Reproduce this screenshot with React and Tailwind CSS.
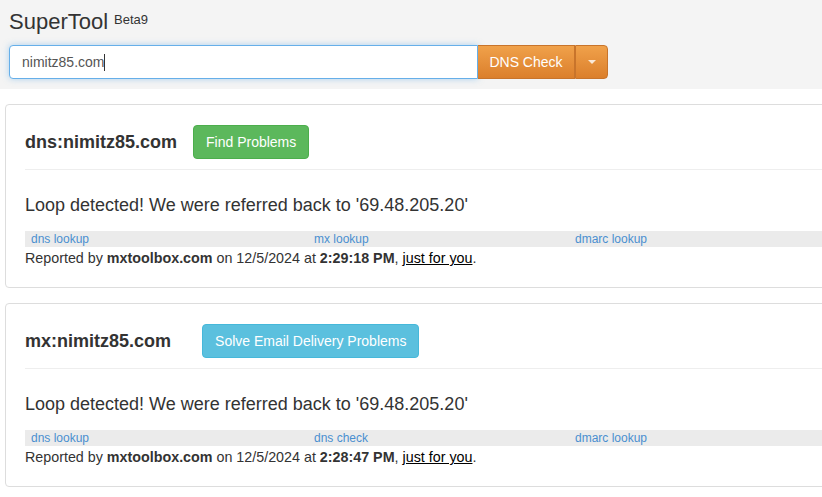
import React from 'react'

const font = { fontFamily: '"Liberation Sans", Arial, sans-serif' }

function ResultCard({ title, button, buttonClass, links, time }) {
  return (
    <div className="w-[900px] border border-[#dddddd] rounded-[4px] bg-white px-[19px] pt-[20px] pb-[19px]">
      {/* header */}
      <div className="flex items-center gap-4 pb-[10px] border-b border-[#eeeeee]">
        <h2 className="text-[18px] font-bold text-[#333333] leading-[20px]">{title}</h2>
        <button className={`h-[34px] px-3 rounded-[4px] border text-[14px] text-white leading-[20px] ${buttonClass}`}>
          {button}
        </button>
      </div>

      <div className="mt-[22px] mb-[13px] text-[18px] leading-[26px] text-[#333333]">
        Loop detected! We were referred back to '69.48.205.20'
      </div>

      {/* related tools */}
      <div className="flex bg-[#ebebeb] h-[16px] items-center text-[12px] leading-[16px] text-[#4a8fd0]">
        <a className="w-[283px] pl-[6px]">{links[0]}</a>
        <a className="w-[261px] pl-[6px]">{links[1]}</a>
        <a className="pl-[6px]">{links[2]}</a>
      </div>

      <div className="text-[14.3px] leading-[20px] text-[#333333] mt-px">
        Reported by <b>mxtoolbox.com</b> on 12/5/2024 at <b>{time}</b>,{' '}
        <a className="underline text-black">just for you</a>.
      </div>
    </div>
  )
}

export default function App() {
  return (
    <div className="min-h-screen w-full bg-white overflow-hidden" style={font}>
      {/* top search bar */}
      <div className="bg-[#f4f4f4] px-[9px] pt-[10px] pb-[10px]">
        <div className="flex items-start text-[#333333] leading-[23px]">
          <span className="text-[22px]">SuperTool</span>
          <span className="text-[13px] ml-[6px] leading-[16px] mt-[2px]">Beta9</span>
        </div>
        <div className="flex mt-[12px] h-[34px]">
          <div className="w-[469px] h-full bg-white border border-[#66afe9] rounded-l-[4px] shadow-[0_0_6px_rgba(102,175,233,0.5)] flex items-center pl-[12px] text-[14px] text-[#555555]">
            nimitz85.com<span className="w-px h-[17px] bg-[#333333]" />
          </div>
          <button className="w-[97px] h-full text-white text-[14px] bg-linear-to-b from-[#f0a14a] to-[#db7f2b] border border-[#c8742b] border-l-0">
            DNS Check
          </button>
          <button className="w-[33px] h-full flex items-center justify-center bg-linear-to-b from-[#f0a14a] to-[#db7f2b] border border-[#c8742b] border-l-[#c8742b] rounded-r-[4px]">
            <span className="w-0 h-0 border-l-[4px] border-r-[4px] border-t-[4px] border-l-transparent border-r-transparent border-t-white/80" />
          </button>
        </div>
      </div>

      {/* results */}
      <div className="flex flex-col gap-[15px] pl-[5px] pt-[15px]">
        <ResultCard
          title="dns:nimitz85.com"
          button="Find Problems"
          buttonClass="bg-[#5cb85c] border-[#4cae4c]"
          links={['dns lookup', 'mx lookup', 'dmarc lookup']}
          time="2:29:18 PM"
        />
        <ResultCard
          title="mx:nimitz85.com"
          button="Solve Email Delivery Problems"
          buttonClass="bg-[#5bc0de] border-[#46b8da] ml-[15px]"
          links={['dns lookup', 'dns check', 'dmarc lookup']}
          time="2:28:47 PM"
        />
      </div>
    </div>
  )
}
